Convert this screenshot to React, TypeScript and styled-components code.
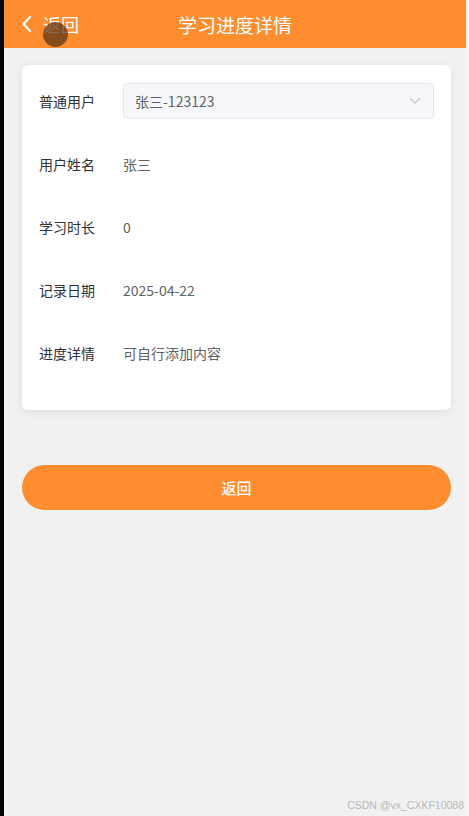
import React from "react";
import styled, { createGlobalStyle } from "styled-components";

const Global = createGlobalStyle`
  html, body { margin: 0; padding: 0; }
  body { font-family: "Noto Sans CJK SC", "Noto Sans", sans-serif; background: #f1f1f1; }
  * { box-sizing: border-box; }
`;

const Screen = styled.div`
  display: flex;
  width: 469px;
  height: 816px;
  overflow: hidden;
`;

const LeftEdge = styled.div`
  width: 4px;
  background: #050505;
  flex-shrink: 0;
`;

const RightEdge = styled.div`
  width: 3px;
  background: #f7f7f7;
  flex-shrink: 0;
`;

const Main = styled.div`
  position: relative;
  flex: 1;
  display: flex;
  flex-direction: column;
  background: #f1f1f1;
`;

const Header = styled.header`
  height: 48px;
  background: #fe8d30;
  display: flex;
  align-items: center;
  justify-content: center;
  position: relative;
`;

const BackLink = styled.div`
  position: absolute;
  left: 17px;
  top: 0;
  height: 48px;
  display: flex;
  align-items: center;
  gap: 10px;
  color: #fff;
  font-size: 18px;
`;

const Title = styled.h1`
  margin: 0;
  font-size: 19px;
  font-weight: 400;
  color: #fff;
`;

const Touch = styled.div`
  position: absolute;
  left: 39px;
  top: 22px;
  width: 25px;
  height: 25px;
  border-radius: 50%;
  background: rgba(90, 50, 20, 0.72);
`;

const Content = styled.div`
  padding: 17px 15px 0 18px;
  display: flex;
  flex-direction: column;
`;

const Card = styled.div`
  background: #fff;
  border-radius: 6px;
  box-shadow: 0 2px 10px rgba(0, 0, 0, 0.08);
  padding: 18px 17px 39px 17px;
  display: flex;
  flex-direction: column;
  gap: 27px;
`;

const Row = styled.div`
  display: flex;
  align-items: center;
  height: 36px;
`;

const Label = styled.div`
  width: 84px;
  flex-shrink: 0;
  font-size: 14px;
  color: #303133;
`;

const Value = styled.div`
  font-size: 14px;
  color: #606266;
`;

const Select = styled.div`
  flex: 1;
  height: 36px;
  background: #f5f7fa;
  border: 1px solid #e4e7ed;
  border-radius: 4px;
  display: flex;
  align-items: center;
  justify-content: space-between;
  padding: 0 12px 0 11px;
  font-size: 14px;
  color: #606266;
`;

const ReturnButton = styled.button`
  margin-top: 55px;
  height: 45px;
  border: none;
  border-radius: 23px;
  background: #fe8d30;
  color: #fff;
  font-family: inherit;
  font-size: 15px;
  font-weight: 500;
`;

const Watermark = styled.div`
  position: absolute;
  right: 2px;
  bottom: 5px;
  font-family: "Liberation Sans", sans-serif;
  font-size: 10.5px;
  color: #b8b8b8;
`;

const rows = [
  { label: "用户姓名", value: "张三" },
  { label: "学习时长", value: "0" },
  { label: "记录日期", value: "2025-04-22" },
  { label: "进度详情", value: "可自行添加内容" },
];

export default function App() {
  return (
    <>
      <Global />
      <Screen>
        <LeftEdge />
        <Main>
          <Header>
            <BackLink>
              <svg width="12" height="18" viewBox="0 0 12 18">
                <path d="M9 2 L2.5 9 L9 16" fill="none" stroke="#fff" strokeWidth="2.2" strokeLinecap="round" strokeLinejoin="round" />
              </svg>
              <span>返回</span>
            </BackLink>
            <Title>学习进度详情</Title>
            <Touch />
          </Header>
          <Content>
            <Card>
              <Row>
                <Label>普通用户</Label>
                <Select>
                  <span>张三-123123</span>
                  <svg width="12" height="8" viewBox="0 0 12 8">
                    <path d="M1 1.5 L6 6 L11 1.5" fill="none" stroke="#c0c4cc" strokeWidth="1.2" />
                  </svg>
                </Select>
              </Row>
              {rows.map((r) => (
                <Row key={r.label}>
                  <Label>{r.label}</Label>
                  <Value>{r.value}</Value>
                </Row>
              ))}
            </Card>
            <ReturnButton>返回</ReturnButton>
          </Content>
          <Watermark>CSDN @vx_CXKF10088</Watermark>
        </Main>
        <RightEdge />
      </Screen>
    </>
  );
}
